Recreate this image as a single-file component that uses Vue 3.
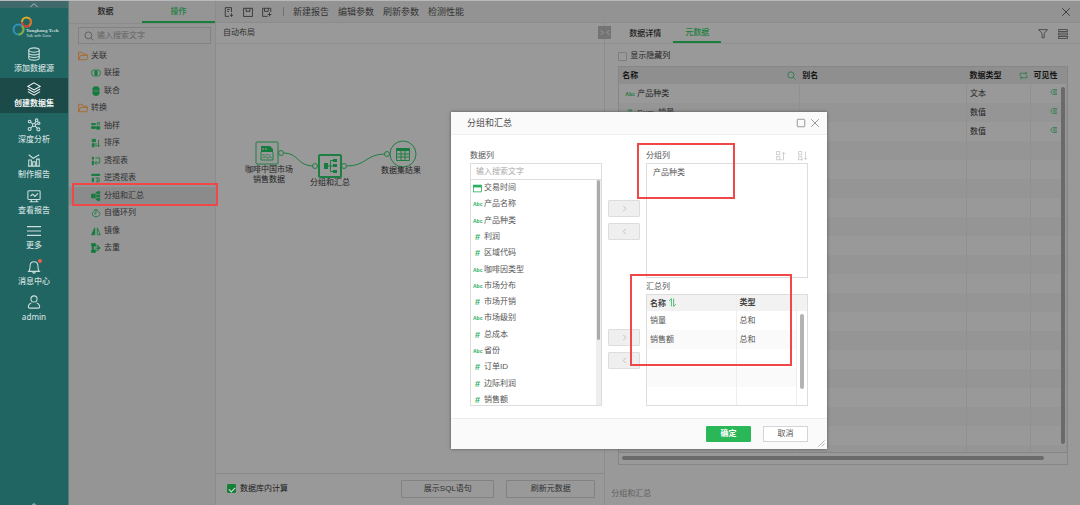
<script setup>
import { h, ref } from 'vue'

const glyphs = {
  database: '<ellipse cx="8" cy="3.5" rx="6" ry="2.5"/><path d="M2 3.5v9c0 1.4 2.7 2.5 6 2.5s6-1.1 6-2.5v-9M2 6.500c0 1.4 2.7 2.5 6 2.5s6-1.1 6-2.5M2 9.500c0 1.4 2.7 2.5 6 2.5s6-1.1 6-2.5"/>',
  layers: '<path d="M8 1l7 4-7 4-7-4zM1 8l7 4 7-4M1 11l7 4 7-4"/>',
  graph: '<circle cx="8" cy="8" r="1.8"/><circle cx="3" cy="4" r="1.5"/><circle cx="11" cy="2.5" r="1.5"/><circle cx="13.5" cy="6" r="1.3"/><circle cx="3" cy="12.5" r="1.7"/><circle cx="13" cy="13" r="1.7"/><path d="M4.200 5l2.300 1.800M8.700 6.300l1.500-2.500M9.700 7.500l2.500-1M4.300 11.300l2.300-2M9.300 9.300l2.400 2.400"/>',
  chart: '<path d="M2 15V8h3v7M6.500 15V10h3v5M11 15V7h3v8M1 15h14M2 2l5 4 7-4"/>',
  monitor: '<rect x="1" y="2" width="14" height="10" rx="1"/><path d="M4 8l2.500-2L9 8.500 12.500 5M5 12v2.500M11 12v2.500M3 14.500h10"/>',
  menu: '<path d="M0 3h16M0 8h16M0 13h16"/>',
  bell: '<path d="M2 13c1.500-1.500 1.500-3 1.500-6 0-3 2-5 4.500-5s4.500 2 4.500 5c0 3 0 4.500 1.500 6zM6.500 13.500c0 2 3 2 3 0"/>',
  user: '<circle cx="8" cy="4.500" r="3.500"/><path d="M5 9c-2.500 1-3.500 3-3.500 4.500 0 1 .5 1.500 1.500 1.500h10c1 0 1.500-.5 1.500-1.500 0-1.500-1-3.500-3.500-4.500"/>',
  up: '<path d="M1 12l7-7 7 7"/>',
  search: '<circle cx="7" cy="7" r="5.500"/><path d="M11 11l4 4"/>',
  folder: '<path d="M1 14V2h5l2 3h6v2M1 14l3-7h12l-2 7z"/>',
  join: '<rect x="1" y="3" width="9" height="10" rx="4.500"/><rect x="6" y="3" width="9" height="10" rx="4.500"/><path d="M8 4v8" stroke-width="4"/>',
  union: '<path d="M3 7V4q0-3 5-3t5 3v3l-2 1 2 1v3q0 3-5 3t-5-3V9l2-1z" fill="currentColor"/><path d="M5 8h6" stroke="#959595" stroke-width="1"/>',
  sample: '<path d="M1 4h6v2H1zM1 9h6v3H1zM9 9h5v4H9z" fill="currentColor"/><path d="M10 7V3h4M13 2v5"/>',
  sort: '<path d="M2 2h5v4H2zM2 9h3v5H2z" fill="currentColor"/><path d="M8 8v6M12 3v11M9.500 11.500L12 14l2.500-2.500"/>',
  pivot: '<path d="M2 2h2v3H2zM2 8h2v6H2z" fill="currentColor"/><path d="M7 3h7v8H7M9 8l-3 3 3 3"/>',
  unpivot: '<path d="M1 2h13v2H1zM2 8h2v6H2z" fill="currentColor"/><path d="M7 8h6v6H8M10 9v4"/>',
  group: '<path d="M1 5h5v6H1zM10 1h4v3h-4zM10 6.500h4v3h-4zM10 12h4v3h-4z" fill="currentColor"/><path d="M6 8h5M8 8V2.500h3M8 8v5.500h3"/>',
  cycle: '<path d="M5 5C1 7 1 14 8 14s8-7 3-9M8 8V2L5 4M8 2l3 2M5 10l3-2"/>',
  mirror: '<path d="M6 3v11H1z" fill="currentColor"/><path d="M10 3v11h5z"/>',
  dedupe: '<path d="M1 1h6v4H1zM1 11h6v4H1zM2 6h2v4H2z" fill="currentColor"/><path d="M9 3l5 5-5 5M7 8h6" stroke-width="2"/>',
  file: '<path d="M8 15H2V1h10v7M5 4h4M5 7h3M12 10v5M9.500 12.500L12 15l2.500-2.500"/>',
  save: '<rect x="1" y="2" width="14" height="13"/><path d="M5 2v5h6V2"/>',
  saveas: '<path d="M9 15H1V2h13v6M4 2v5h6V2M12 9v6M9 12h6"/>',
  close: '<path d="M2 2l12 12M14 2L2 14"/>',
  max: '<rect x="2" y="2" width="12" height="12" rx="1"/>',
  filter: '<path d="M1 1h14l-5 6v7H6.500V7z"/>',
  rows: '<rect x="1" y="1" width="14" height="3"/><rect x="1" y="6.500" width="14" height="3"/><rect x="1" y="12" width="14" height="3"/>',
  swap: '<path d="M2 9V4h11M11 2l3 2-3 2M14 7v5H3M5 10l-3 2 3 2"/>',
  eye: '<path d="M14 3H8C4 3 2 6 2 8s2 5 6 5h6M14 6H9a2 2 0 0 0 0 4h5"/>',
  next: '<path d="M5 2l6 6-6 6"/>',
  prev: '<path d="M11 2L5 8l6 6"/>',
  date: '<rect x="1" y="2" width="14" height="12"/><path d="M1 4h14" stroke-width="4"/>',
  asc: '<rect x="1" y="1" width="5" height="5"/><rect x="1" y="9" width="5" height="5"/><path d="M6 14h4M12 15V2M9 5l3-3 3 3"/>',
  desc: '<rect x="1" y="1" width="5" height="5"/><rect x="1" y="9" width="5" height="5"/><path d="M6 14h2M12 1v13M9 11l3 3 3-3"/>',
  order: '<path d="M2 5l4-4v14M10 1v14l4-4"/>',
  grip: '<path d="M1 15L15 1M8 15l7-7"/>'
}
const Glyph = (p) => h('svg', { viewBox: '0 0 16 16', 'aria-hidden': 'true', innerHTML: glyphs[p.name] })

const nav = [
  ['database', '添加数据源'], ['layers', '创建数据集'], ['graph', '深度分析'], ['chart', '制作报告'],
  ['monitor', '查看报告'], ['menu', '更多'], ['bell', '消息中心'], ['user', 'admin']
]
const tree = [
  ['folder', '关联'], ['join', '联接'], ['union', '联合'], ['folder', '转换'], ['sample', '抽样'], ['sort', '排序'],
  ['pivot', '透视表'], ['unpivot', '逆透视表'], ['group', '分组和汇总'], ['cycle', '自循环列'], ['mirror', '镜像'], ['dedupe', '去重']
]
const meta = [
  ['Abc', '产品种类', '文本'], ['#', 'Sum_销量', '数值'], ['#', 'Sum_销售额', '数值'],
  ...Array.from({ length: 17 }, () => null)
]
const fields = [
  ['date', '交易时间'], ['Abc', '产品名称'], ['Abc', '产品种类'], ['#', '利润'], ['#', '区域代码'], ['Abc', '咖啡因类型'], ['Abc', '市场分布'],
  ['#', '市场开销'], ['Abc', '市场级别'], ['#', '总成本'], ['Abc', '省份'], ['#', '订单ID'], ['#', '边际利润'], ['#', '销售额']
]
const totals = [['销量', '总和'], ['销售额', '总和'], ['', ''], ['', ''], ['', '']]
const inDb = ref(true)
const showHidden = ref(false)
</script>

<template>
  <div class="app">
    <aside class="side">
      <button class="side-top" aria-label="收起"><Glyph name="up" /></button>
      <div class="logo">
        <svg class="rings" viewBox="0 0 22 22" aria-hidden="true">
          <circle cx="14.500" cy="6" r="4.500" stroke="#d9ac2c" />
          <path d="M10 6a4.500 4.500 0 0 0 7 3.700" stroke="#cf3b35" />
          <path d="M17 9.700a4.500 4.500 0 0 0 1-6.500" stroke="#d86d2c" />
          <circle cx="6.500" cy="13.500" r="5" stroke="#3193bb" />
          <path d="M10 10a5 5 0 0 1-3.500 8.500" stroke="#83ad42" />
        </svg>
        <div class="brand"><b>Yonghong Tech</b><span>Talk with Data</span></div>
      </div>
      <nav class="nav">
        <a v-for="([icon, label], i) in nav" :key="label" href="#" :class="{ active: i === 1, latin: icon === 'user' }">
          <span class="nav-icon"><Glyph :name="icon" /><i v-if="icon === 'bell'" class="dot"></i></span>
          <span>{{ label }}</span>
        </a>
      </nav>
      <div class="side-end"><Glyph name="up" /></div>
    </aside>

    <section class="ops">
      <div class="ops-tabs">
        <button>数据</button><button class="on">操作</button>
      </div>
      <label class="find"><Glyph name="search" /><input type="text" placeholder="输入搜索文字" aria-label="搜索操作" /></label>
      <ul class="tree">
        <li v-for="[icon, label] in tree" :key="label" :class="{ folder: icon === 'folder', picked: icon === 'group' }">
          <Glyph :name="icon" /><span>{{ label }}</span>
        </li>
      </ul>
      <div class="mark mark-op"></div>
    </section>

    <main class="work">
      <header class="toolbar">
        <button aria-label="新建"><Glyph name="file" /></button>
        <button aria-label="保存"><Glyph name="save" /></button>
        <button aria-label="另存为"><Glyph name="saveas" /></button>
        <i class="rule"></i>
        <button>新建报告</button><button>编辑参数</button><button>刷新参数</button><button>检测性能</button>
        <button class="quit" aria-label="关闭"><Glyph name="close" /></button>
      </header>
      <div class="panes">
        <section class="flow">
          <div class="flow-head">自动布局</div>
          <div class="canvas">
            <svg class="wires" viewBox="0 0 388 160" aria-hidden="true">
              <path d="M68 109C82 109 82 122 97 122M131 122C150 122 150 110 169 110" />
              <rect x="40" y="98" width="22" height="22" rx="1" />
              <circle cx="65" cy="109" r="2.500" /><circle cx="99" cy="122" r="2.500" /><circle cx="128" cy="122" r="2.500" /><circle cx="171" cy="110" r="2.500" />
              <rect class="bold" x="103" y="111" width="22" height="22" rx="1" />
              <circle cx="187" cy="110" r="13" />
              <path class="solid" d="M45 102h9l3 3v3H45z" />
              <path d="M45 108v8h12v-8" />
              <path d="M47 104v2M50 104v2" stroke="#999" />
              <text x="51" y="114" text-anchor="middle">SQL</text>
              <path class="solid" d="M108 119h4v6h-4zM117 115h4v3h-4zM117 120h4v3h-4zM117 126h4v3h-4z" />
              <path d="M112 122h6M114.500 122v-5.500h3M114.500 122v5.500h3" />
              <path class="solid" d="M180 104h14v3h-14z" />
              <path d="M180.500 104v12.500h13v-12.500M181 110h12M181 113h12M185 106v10M189 106v10" />
            </svg>
            <span class="node n1">咖啡中国市场<br />销售数据</span>
            <span class="node n2">分组和汇总</span>
            <span class="node n3">数据集结果</span>
          </div>
          <footer class="flow-foot">
            <label class="check"><input v-model="inDb" type="checkbox" />数据库内计算</label>
            <button>展示SQL语句</button><button class="narrow">刷新元数据</button>
          </footer>
          <button class="split" aria-label="展开收起"><Glyph name="next" /><Glyph name="prev" /></button>
        </section>

        <section class="detail">
          <div class="tabs">
            <button>数据详情</button><button class="on">元数据</button>
            <button class="tool first" aria-label="筛选"><Glyph name="filter" /></button>
            <button class="tool" aria-label="列表"><Glyph name="rows" /></button>
          </div>
          <label class="check hidden-cols"><input v-model="showHidden" type="checkbox" />显示隐藏列</label>
          <div class="grid">
            <div class="grid-view">
              <table>
                <colgroup><col class="c-name" /><col /><col class="c-type" /><col class="c-vis" /></colgroup>
                <thead>
                  <tr>
                    <th><div>名称<Glyph name="search" /></div></th>
                    <th>别名</th>
                    <th><div>数据类型<Glyph name="swap" /></div></th>
                    <th>可见性</th>
                  </tr>
                </thead>
                <tbody>
                  <tr v-for="(row, i) in meta" :key="i">
                    <td><template v-if="row"><em :class="{ num: row[0] === '#' }">{{ row[0] }}</em>{{ row[1] }}</template></td>
                    <td></td>
                    <td>{{ row ? row[2] : '' }}</td>
                    <td class="vis"><Glyph v-if="row" name="eye" /></td>
                  </tr>
                </tbody>
              </table>
              <i class="vbar"></i>
            </div>
            <div class="hbar"><i></i></div>
          </div>
          <div class="status">分组和汇总</div>
        </section>
      </div>
    </main>

    <div class="dialog" role="dialog" aria-labelledby="dlg-title">
      <header class="dlg-head">
        <h2 id="dlg-title">分组和汇总</h2>
        <button aria-label="最大化"><Glyph name="max" /></button>
        <button aria-label="关闭"><Glyph name="close" /></button>
      </header>
      <div class="dlg-body">
        <div class="source">
          <label class="cap" for="field-search">数据列</label>
          <input id="field-search" type="text" placeholder="输入搜索文字" />
          <div class="list">
            <ul>
              <li v-for="[kind, name] in fields" :key="name">
                <Glyph v-if="kind === 'date'" name="date" /><em v-else :class="{ num: kind === '#' }">{{ kind }}</em><span>{{ name }}</span>
              </li>
            </ul>
            <i class="track"></i>
          </div>
        </div>
        <div class="moves">
          <div><button aria-label="添加分组列"><Glyph name="next" /></button><button aria-label="移除分组列"><Glyph name="prev" /></button></div>
          <div><button aria-label="添加汇总列"><Glyph name="next" /></button><button aria-label="移除汇总列"><Glyph name="prev" /></button></div>
        </div>
        <div class="target">
          <div class="cap">分组列
            <span><button aria-label="升序"><Glyph name="asc" /></button><button aria-label="降序"><Glyph name="desc" /></button></span>
          </div>
          <div class="groupbox">产品种类</div>
          <div class="cap low">汇总列</div>
          <div class="sumbox">
            <table>
              <colgroup><col class="c-sum" /><col /></colgroup>
              <thead><tr><th>名称 <Glyph name="order" /></th><th>类型</th></tr></thead>
              <tbody>
                <tr v-for="(t, i) in totals" :key="i"><td>{{ t[0] }}</td><td>{{ t[1] }}</td></tr>
              </tbody>
            </table>
            <div class="sum-side"><i></i></div>
          </div>
        </div>
      </div>
      <footer class="dlg-foot">
        <button class="ok">确定</button><button>取消</button>
        <Glyph class="grip" name="grip" />
      </footer>
      <div class="mark mark-group"></div>
      <div class="mark mark-sum"></div>
    </div>
  </div>
</template>

<style>
body { background: #999; }
</style>

<style scoped>
* { box-sizing: border-box; }
.app {
  position: relative; display: flex; height: 100vh; overflow: hidden;
  font: 8px/10px "Liberation Sans", "Noto Sans CJK SC", sans-serif; color: #303030;
  background: #999; border-top: 1px solid #b9b9b9;
}
.app :deep(svg) { width: 10px; height: 10px; fill: none; stroke: currentColor; stroke-width: 1.4; flex: none; }
button { font: inherit; color: inherit; background: none; border: 0; padding: 0; display: inline-flex; align-items: center; justify-content: center; }
input { font: inherit; color: inherit; margin: 0; }
ul { list-style: none; margin: 0; padding: 0; }
em { font-style: normal; font-weight: 700; }
i { display: block; }
table { border-collapse: collapse; table-layout: fixed; width: 100%; }
th, td { text-align: left; padding: 0 3px; white-space: nowrap; }

/* sidebar */
.side { width: 69px; flex: none; display: flex; flex-direction: column; background: #206562; color: #cbdedd; border-right: 1px solid #517f7e; }
.side-top { height: 7px; background: #40696c; color: #a9bebe; }
.side .side-top :deep(svg), .side .side-end :deep(svg) { width: 8px; height: 8px; stroke-width: 2; }
.logo { display: flex; height: 34px; padding: 8px 0 0 12px; }
.logo .rings { width: 22px; height: 22px; stroke-width: 2; margin-right: -8px; }
.brand { display: flex; flex-direction: column; padding-top: 12px; font-size: 5px; line-height: 5px; white-space: nowrap; }
.brand b { font-family: "Liberation Serif", serif; }
.brand span { font-size: 4px; }
.nav { display: grid; grid-auto-rows: 1fr; height: 284px; }
.nav a { display: flex; flex-direction: column; align-items: center; justify-content: flex-end; gap: 3px; padding-bottom: 4px; color: inherit; text-decoration: none; font-weight: 500; }
.nav a.active { background: #1c4a48; color: #f2f7f7; font-weight: 700; }
.nav a.latin { font-family: "Noto Sans", sans-serif; }
.nav-icon { position: relative; height: 14px; }
.nav-icon :deep(svg) { width: 14px; height: 14px; display: block; stroke-width: 1.2; }
.dot { position: absolute; top: -1px; right: -1px; width: 4px; height: 4px; border-radius: 50%; background: #ef5b4c; }
.side-end { margin-top: auto; height: 4px; overflow: hidden; text-align: center; line-height: 4px; }

/* operators */
.ops { position: relative; width: 147px; flex: none; background: #959595; border-right: 1px solid #8c8c8c; }
.ops-tabs { display: grid; grid-template-columns: 1fr 1fr; height: 23px; border-bottom: 1px solid #8b8b8b; color: #1c1c1c; font-weight: 500; }
.ops-tabs .on { color: #1b7e3e; border-bottom: 2px solid #1a7f3d; padding-top: 2px; }
.find { display: flex; align-items: center; gap: 3px; height: 17px; margin: 3px 4px 0 9px; padding: 0 5px; border: 1px solid #828282; color: #5b5b5b; }
.find input { flex: 1; min-width: 0; border: 0; background: none; padding: 0; outline: 0; }
input::placeholder { color: #646464; opacity: 1; }
.tree { display: grid; grid-auto-rows: 1fr; height: 210px; margin-top: 3px; }
.tree li { display: flex; align-items: center; gap: 3px; padding-left: 22px; color: #303030; }
.tree li.folder { padding-left: 9px; gap: 3px; }
.tree :deep(svg) { color: #157b3e; }
.tree .folder :deep(svg) { color: #a96723; }
.tree .picked { background: #8b8b8b; }
.mark { position: absolute; border: 2px solid #f04848; pointer-events: none; }
.mark-op { left: 3px; right: -3px; top: 182px; height: 23px; z-index: 2; }

/* work area */
.work { flex: 1; min-width: 0; display: flex; flex-direction: column; }
.toolbar { display: flex; align-items: center; gap: 9px; height: 22px; padding: 0 9px 0 8px; background: #939393; border-bottom: 1px solid #8c8c8c; font-size: 9px; color: #343434; }
.toolbar .rule { width: 1px; height: 9px; background: #717171; margin: 0 0 0 2px; }
.toolbar .quit { margin-left: auto; }
.panes { flex: 1; min-height: 0; display: flex; }
.flow { position: relative; flex: 45 1 0; display: flex; flex-direction: column; border-right: 1px solid #8d8d8d; }
.flow-head { height: 21px; padding: 5px 7px; border-bottom: 1px solid #919191; }
.canvas { position: relative; flex: 1; min-height: 0; overflow: hidden; }
.canvas .wires { width: 388px; height: 160px; stroke: #1f7f42; stroke-width: 1; }
.wires .bold { stroke-width: 2; }
.wires .solid { fill: #157b3e; stroke: none; }
.wires text { font-size: 5px; fill: #157b3e; stroke: none; }
.node { position: absolute; transform: translateX(-50%); white-space: nowrap; text-align: center; color: #222; }
.n1 { left: 53px; top: 121px; }
.n2 { left: 114px; top: 134px; }
.n3 { left: 185px; top: 122px; }
.flow-foot { display: flex; align-items: center; gap: 12px; height: 32px; padding: 0 9px 2px 11px; border-top: 1px solid #8a8a8a; }
.flow-foot button { width: 93px; height: 18px; border: 1px solid #828282; border-radius: 1px; }
.flow-foot .narrow { width: 89px; }
.check { display: flex; align-items: center; gap: 4px; color: #202020; }
.flow-foot .check { margin-right: auto; }
.check input { appearance: none; width: 9px; height: 9px; border: 1px solid #7d7d7d; border-radius: 1px; display: grid; place-items: center; }
.check input:checked { background: #148038; border-color: #148038; }
.check input:checked::after { content: ""; width: 5px; height: 3px; border: solid #ddd; border-width: 0 0 1px 1px; transform: rotate(-45deg); }
.split { position: absolute; right: -7px; top: 3px; width: 13px; height: 13px; background: #747474; color: #aaa; z-index: 1; }
.flow .split :deep(svg) { width: 6px; height: 7px; stroke-width: 2; }
.detail { flex: 55 1 0; min-width: 0; display: flex; flex-direction: column; }
.tabs { display: flex; height: 21px; padding: 0 12px 0 16px; border-bottom: 1px solid #8f8f8f; color: #1c1c1c; }
.tabs button { width: 48px; padding-top: 2px; font-weight: 500; }
.tabs button + button { margin-left: 4px; }
.tabs .on { color: #1b7e3e; border-bottom: 2px solid #1a7f3d; }
.tabs .tool { width: 11px; color: #444; }
.tabs .tool.first { margin-left: auto; }
.tabs .tool + .tool { margin-left: 9px; }
.hidden-cols { margin: 7px 0 5px 13px; gap: 3px; }
.grid { flex: 1; min-height: 0; margin: 0 12px 0 13px; border: 1px solid #868686; display: flex; flex-direction: column; }
.grid-view { position: relative; flex: 1; min-height: 0; overflow: hidden; border-bottom: 1px solid #868686; }
.grid .c-name { width: 180px; }
.grid .c-type { width: 64px; }
.grid .c-vis { width: 36px; }
.grid th { height: 17px; background: #8f8f8f; color: #161616; }
.grid th div { display: flex; justify-content: space-between; align-items: center; }
.grid th :deep(svg) { width: 9px; height: 9px; color: #227b46; }
.grid td { height: 19px; border-right: 1px solid #909090; color: #1f1f1f; }
.grid tr:nth-child(even) td { background: #959595; }
.grid td:first-child { padding-left: 6px; }
.grid em { display: inline-block; width: 12px; font-size: 5px; color: #187a3e; }
.grid em.num { font-size: 9px; padding-left: 2px; }
.grid .vis { text-align: right; padding-right: 8px; }
.grid .vis :deep(svg) { width: 8px; height: 8px; color: #1d7a41; }
.vbar { position: absolute; right: 2px; top: 20px; bottom: 8px; width: 4px; border-radius: 2px; background: #6a6a6a; }
.hbar { height: 11px; padding: 3px 23px 3px 3px; }
.hbar i { height: 4px; border-radius: 2px; background: #6a6a6a; }
.status { height: 40px; padding: 24px 0 0 6px; color: #5f5f5f; }

/* dialog */
.dialog { position: absolute; left: 451px; top: 111px; width: 376px; background: #fff; color: #555; box-shadow: 0 0 3px #555; z-index: 3; }
.dlg-head { display: flex; align-items: center; gap: 4px; height: 23px; padding: 0 7px 0 16px; background: #fafafa; border-bottom: 1px solid #f0f0f0; color: #999; }
.dlg-head h2 { margin: 0 auto 0 0; font-size: 9px; font-weight: 400; color: #505050; }
.dlg-head :deep(svg) { width: 10px; height: 10px; stroke-width: 1.6; }
.dlg-body { display: grid; grid-template-columns: 132px 32px 1fr; gap: 6px; padding: 13px 19px 12px; }
.cap { display: flex; justify-content: space-between; height: 15px; padding-top: 3px; }
.cap.low { padding: 4px 0 0; height: 16px; }
.cap span { display: flex; gap: 12px; color: #ccc; margin-top: -2px; }
.source input { display: block; width: 100%; height: 17px; border: 1px solid #ddd; padding: 0 5px; outline: 0; }
.source input::placeholder { color: #aaa; }
.list { display: flex; height: 226px; overflow: hidden; border: 1px solid #ddd; border-top: 0; }
.list ul { flex: 1; display: grid; grid-auto-rows: 1fr; height: 228px; }
.list li { display: flex; align-items: center; gap: 2px; padding-left: 2px; }
.list em { width: 9px; font-size: 5px; text-align: center; color: #1fae5b; }
.list em.num { font-size: 9px; }
.list li :deep(svg) { width: 9px; height: 9px; color: #1fae5b; }
.track { width: 5px; background: #eee; }
.track::before { content: ""; display: block; width: 3px; height: 160px; margin-left: 1px; border-radius: 2px; background: #aaa; }
.moves { display: flex; flex-direction: column; justify-content: space-between; padding: 52px 0 37px; }
.moves div { display: grid; gap: 6px; }
.moves button { height: 17px; background: #efefef; border: 1px solid #ddd; border-radius: 1px; color: #bbb; }
.moves :deep(svg) { width: 7px; height: 7px; stroke-width: 2; }
.groupbox { height: 115px; border: 1px solid #ddd; padding: 4px 6px; }
.sumbox { display: flex; border: 1px solid #ddd; height: 112px; overflow: hidden; }
.sumbox .c-sum { width: 89px; }
.sumbox th { height: 16px; background: #f2f2f2; color: #444; }
.sumbox td { height: 19px; }
.sumbox th, .sumbox td { border-right: 1px solid #eee; }
.sumbox th :deep(svg) { width: 9px; height: 9px; color: #1fae5b; vertical-align: -1px; }
.sumbox tr:nth-child(even) td { background: #fafafa; }
.sum-side { width: 10px; flex: none; }
.sum-side::before { content: ""; display: block; height: 16px; background: #f2f2f2; }
.sum-side i { width: 4px; height: 75px; margin: 3px 0 0 3px; border-radius: 2px; background: #b3b3b3; }
.dlg-foot { position: relative; display: flex; justify-content: flex-end; align-items: center; gap: 12px; height: 31px; padding: 0 19px 0 0; background: #fafafa; border-top: 1px solid #eee; }
.dlg-foot button { width: 45px; height: 16px; border: 1px solid #d5d5d5; background: #fff; }
.dlg-foot .ok { background: #2ab757; border-color: #2ab757; border-radius: 1px; color: #fff; font-weight: 700; }
.dlg-foot .grip { position: absolute; right: 2px; bottom: 2px; width: 7px; height: 7px; color: #aaa; stroke-width: 2; }
.mark-group { left: 186px; top: 31px; width: 98px; height: 56px; }
.mark-sum { left: 179px; top: 162px; width: 162px; height: 92px; }
</style>
